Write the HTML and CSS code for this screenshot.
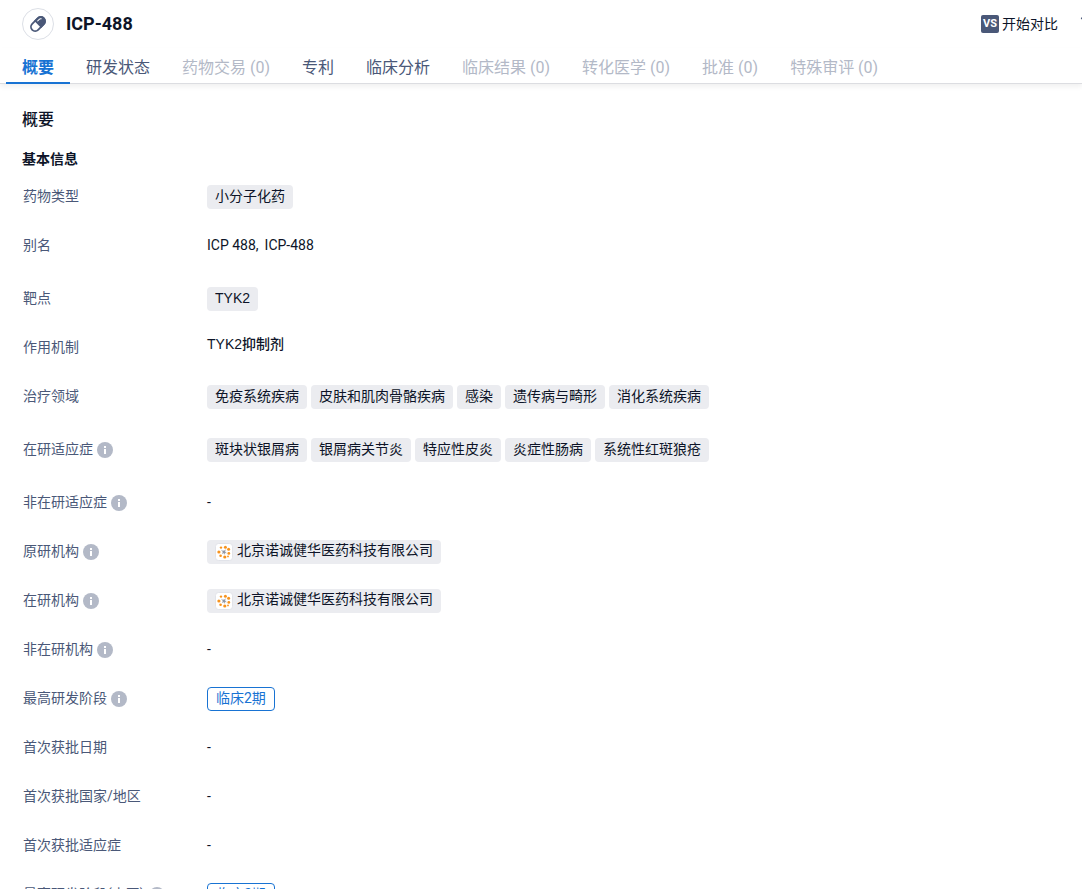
FILE: index.html
```html
<!DOCTYPE html>
<html lang="zh-CN">
<head>
  <meta charset="UTF-8">
  <meta name="viewport" content="width=device-width, initial-scale=1.0">
  <title>ICP-488</title>
  <link rel="stylesheet" href="styles.css">
</head>
<body>
  <!-- shared icons -->
  <svg class="sprite" aria-hidden="true">
    <symbol id="icon-info" viewBox="0 0 16 16">
      <circle cx="8" cy="8" r="8" fill="#b3b9c7"/>
      <path d="M7 4h2v2H7zM7 7h2v5H7z" fill="#fff"/>
    </symbol>
    <symbol id="icon-org" viewBox="0 0 18 18">
      <rect x="0.5" y="0.5" width="17" height="17" rx="3" fill="#fff" stroke="#e1e3e9"/>
      <path d="M9 9L6.5 7.4M9 9l1.6-2.4M9 9l2.4 1M9 9l-2 1.6M9 9l.6 2.4" stroke="#a6abb5" stroke-width="1"/>
      <circle cx="9" cy="9" r="1.4" fill="#9297a3"/>
      <g fill="#f7931e">
        <circle cx="6" cy="4.6" r="1.2"/>
        <circle cx="10.4" cy="4.2" r="1.5"/>
        <circle cx="13.6" cy="6.2" r="1.5"/>
        <circle cx="13.8" cy="10.4" r="1.4"/>
        <circle cx="3.9" cy="9" r="1.6"/>
        <circle cx="5.6" cy="12.8" r="1.3"/>
        <circle cx="9.8" cy="14" r="1.6"/>
        <circle cx="13" cy="13.4" r="0.9"/>
      </g>
    </symbol>
  </svg>

  <div class="page">
    <header class="header">
      <span class="drug-icon">
        <svg width="20" height="20" viewBox="0 0 20 20">
          <g transform="rotate(-45 10 10)">
            <rect x="1.8" y="5.8" width="16.4" height="8.4" rx="4.2" fill="#fff" stroke="#4a5878" stroke-width="1.8"/>
            <path d="M9.5 5H14a5 5 0 0 1 0 10H9.5z" fill="#4a5878"/>
            <path d="M12 7.6h2.2a2 2 0 0 1 1.7 1" fill="none" stroke="#fff" stroke-width="1" stroke-linecap="round"/>
          </g>
        </svg>
      </span>
      <h1>ICP-488</h1>
      <div class="actions">
        <button class="action" type="button">
          <span class="vs">VS</span>
          开始对比
        </button>
        <button class="action more" type="button" aria-label="更多">
          <svg width="18" height="18" viewBox="0 0 18 18">
            <path d="M1 3h15l-6 7v6l-3-2v-4z" fill="none" stroke="#4a5878" stroke-width="1"/>
          </svg>
        </button>
      </div>
    </header>

    <nav class="tabs">
      <a class="tab active" href="#overview">概要</a>
      <a class="tab" href="#status">研发状态</a>
      <a class="tab disabled" href="#deals">药物交易 (0)</a>
      <a class="tab" href="#patents">专利</a>
      <a class="tab" href="#trials">临床分析</a>
      <a class="tab disabled" href="#results">临床结果 (0)</a>
      <a class="tab disabled" href="#translational">转化医学 (0)</a>
      <a class="tab disabled" href="#approvals">批准 (0)</a>
      <a class="tab disabled" href="#designations">特殊审评 (0)</a>
    </nav>

    <main class="content" id="overview">
      <h2>概要</h2>
      <h3>基本信息</h3>
      <dl class="info">
        <div class="row">
          <dt>药物类型</dt>
          <dd><span class="tag">小分子化药</span></dd>
        </div>
        <div class="row tall">
          <dt>别名</dt>
          <dd><span>ICP 488,</span><span>ICP-488</span></dd>
        </div>
        <div class="row">
          <dt>靶点</dt>
          <dd><a class="tag" href="#tyk2">TYK2</a></dd>
        </div>
        <div class="row">
          <dt>作用机制</dt>
          <dd class="mechanism">TYK2抑制剂</dd>
        </div>
        <div class="row tall">
          <dt>治疗领域</dt>
          <dd>
            <a class="tag" href="#area">免疫系统疾病</a>
            <a class="tag" href="#area">皮肤和肌肉骨骼疾病</a>
            <a class="tag" href="#area">感染</a>
            <a class="tag" href="#area">遗传病与畸形</a>
            <a class="tag" href="#area">消化系统疾病</a>
          </dd>
        </div>
        <div class="row tall">
          <dt>在研适应症<svg class="info-icon"><use href="#icon-info"/></svg></dt>
          <dd>
            <a class="tag" href="#disease">斑块状银屑病</a>
            <a class="tag" href="#disease">银屑病关节炎</a>
            <a class="tag" href="#disease">特应性皮炎</a>
            <a class="tag" href="#disease">炎症性肠病</a>
            <a class="tag" href="#disease">系统性红斑狼疮</a>
          </dd>
        </div>
        <div class="row">
          <dt>非在研适应症<svg class="info-icon"><use href="#icon-info"/></svg></dt>
          <dd>-</dd>
        </div>
        <div class="row">
          <dt>原研机构<svg class="info-icon"><use href="#icon-info"/></svg></dt>
          <dd><a class="tag org" href="#org"><svg class="org-icon"><use href="#icon-org"/></svg>北京诺诚健华医药科技有限公司</a></dd>
        </div>
        <div class="row">
          <dt>在研机构<svg class="info-icon"><use href="#icon-info"/></svg></dt>
          <dd><a class="tag org" href="#org"><svg class="org-icon"><use href="#icon-org"/></svg>北京诺诚健华医药科技有限公司</a></dd>
        </div>
        <div class="row">
          <dt>非在研机构<svg class="info-icon"><use href="#icon-info"/></svg></dt>
          <dd>-</dd>
        </div>
        <div class="row">
          <dt>最高研发阶段<svg class="info-icon"><use href="#icon-info"/></svg></dt>
          <dd><span class="phase">临床2期</span></dd>
        </div>
        <div class="row">
          <dt>首次获批日期</dt>
          <dd>-</dd>
        </div>
        <div class="row">
          <dt>首次获批国家/地区</dt>
          <dd>-</dd>
        </div>
        <div class="row">
          <dt>首次获批适应症</dt>
          <dd>-</dd>
        </div>
        <div class="row">
          <dt>最高研发阶段(中国)<svg class="info-icon"><use href="#icon-info"/></svg></dt>
          <dd><span class="phase">临床2期</span></dd>
        </div>
      </dl>
    </main>
  </div>
</body>
</html>
```
FILE: styles.css
```css
* { margin: 0; padding: 0; box-sizing: border-box; }

body {
  font-family: Roboto, "Noto Sans CJK SC", sans-serif;
  font-size: 14px;
  color: #0d1428;
  background-color: #fff;
}

a { color: inherit; text-decoration: none; }

.sprite {
  position: absolute;
  width: 0;
  height: 0;
}

.page {
  display: flex;
  flex-direction: column;
  height: 100vh;
  overflow: hidden;
}

/* Header */
.header {
  display: flex;
  flex-shrink: 0;
  align-items: center;
  height: 48px;
  padding-left: 22px;
  overflow: hidden;
}

.drug-icon {
  display: flex;
  align-items: center;
  justify-content: center;
  width: 32px;
  height: 32px;
  margin-right: 12px;
  border: 1px solid #dcdfe6;
  border-radius: 50%;
}

h1 {
  font-size: 18px;
  font-weight: 700;
  line-height: 24px;
}

.actions {
  display: flex;
  gap: 22px;
  margin-left: auto;
}

.action {
  display: flex;
  align-items: flex-start;
  gap: 3px;
  font: inherit;
  line-height: 18px;
  color: inherit;
  background: none;
  border: none;
  cursor: pointer;
}

.vs {
  width: 18px;
  height: 18px;
  font-size: 11px;
  font-weight: 700;
  line-height: 18px;
  text-align: center;
  color: #fff;
  background-color: #4a5878;
  border-radius: 2px;
}

/* runs past the right edge of the bar */
.more {
  width: 2px;
}

.more svg {
  flex-shrink: 0;
}

/* Tabs */
.tabs {
  display: flex;
  flex-shrink: 0;
  height: 36px;
  padding-left: 6px;
  border-bottom: 1px solid #dcdde1;
  box-shadow: 0 3px 5px rgba(0, 0, 0, 0.06);
}

.tab {
  height: 36px;
  padding: 0 16px;
  font-size: 16px;
  line-height: 40px;
  color: #4a5878;
  white-space: nowrap;
}

.tab.active {
  font-weight: 700;
  color: #1873d3;
  border-bottom: 2px solid #1873d3;
}

.tab.disabled {
  color: #b3b9c7;
}

/* Content */
.content {
  padding: 24px 22px;
}

h2 {
  font-size: 16px;
  font-weight: 500;
  line-height: 24px;
  margin-bottom: 16px;
}

h3 {
  font-size: 14px;
  font-weight: 700;
  line-height: 22px;
  margin-bottom: 15px;
}

.row {
  display: flex;
  align-items: flex-start;
  margin-bottom: 25px;
  line-height: 22px;
}

.row.tall {
  margin-bottom: 29px;
}

dt {
  display: flex;
  flex-shrink: 0;
  gap: 4px;
  width: 185px;
  padding-left: 1px;
  color: #4a5878;
}

dd {
  display: flex;
  flex-wrap: wrap;
  gap: 4px;
  min-height: 24px;
}

dd span + span {
  margin-left: 2px;
}

.mechanism {
  font-family: "Liberation Sans", "Noto Sans CJK SC", sans-serif;
  font-weight: 500;
  line-height: 16px;
}

.info-icon {
  width: 16px;
  height: 16px;
  margin-top: 4px;
}

.tag {
  height: 24px;
  padding: 0 8px;
  font-family: "Liberation Sans", "Noto Sans CJK SC", sans-serif;
  line-height: 22px;
  background-color: #ebecf0;
  border-radius: 4px;
}

.org {
  display: flex;
  line-height: 20px;
}

.org-icon {
  width: 18px;
  height: 18px;
  margin: 3px 4px 0 0;
}

.phase {
  height: 24px;
  padding: 0 8px;
  line-height: 20px;
  color: #1873d3;
  border: 1px solid #1873d3;
  border-radius: 4px;
}
```
